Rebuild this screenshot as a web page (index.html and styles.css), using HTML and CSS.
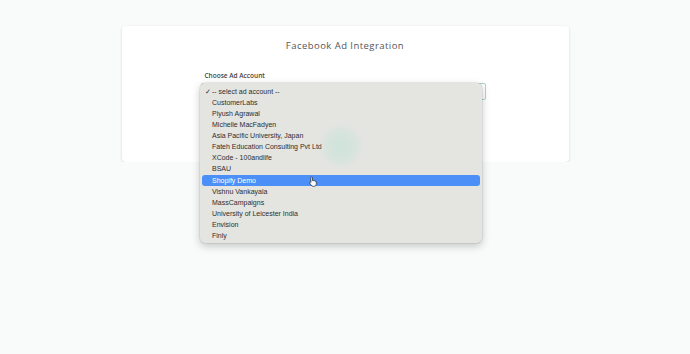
FILE: index.html
```html
<!DOCTYPE html>
<html lang="en">

<head>
    <meta charset="UTF-8">
    <meta name="viewport" content="width=device-width, initial-scale=1.0">
    <title>Facebook Ad Integration</title>

    <link rel="stylesheet" href="styles.css">
</head>

<body>
    <div class="page">
        <div class="card">
            <h2 class="card-title">Facebook Ad Integration</h2>
            <div class="field">
                <label class="field-label">Choose Ad Account</label>
                <div class="select-box"></div>
            </div>
        </div>
    </div>

    <div class="dropdown">
        <div class="option selected"><span class="check">&#10003;</span>-- select ad account --</div>
        <div class="option">CustomerLabs</div>
        <div class="option">Piyush Agrawal</div>
        <div class="option">Michelle MacFadyen</div>
        <div class="option">Asia Pacific University, Japan</div>
        <div class="option">Fateh Education Consulting Pvt Ltd</div>
        <div class="option">XCode - 100andlife</div>
        <div class="option">BSAU</div>
        <div class="option active">Shopify Demo</div>
        <div class="option">Vishnu Vankayala</div>
        <div class="option">MassCampaigns</div>
        <div class="option">University of Leicester India</div>
        <div class="option">Envision</div>
        <div class="option">Finly</div>
    </div>

    <div class="ripple"></div>

    <svg class="cursor" width="9" height="11" viewBox="0 0 9 11">
        <path d="M2.6 0.8 C3.2 0.8 3.5 1.2 3.5 1.8 L3.5 4.6 C3.9 4.3 4.6 4.4 4.8 4.9 C5.2 4.6 5.9 4.7 6.1 5.2 C6.6 5 7.3 5.3 7.3 6 L7.3 8 C7.3 9.4 6.4 10.3 5 10.3 L4.2 10.3 C3.2 10.3 2.6 9.8 2 9 L0.8 7.2 C0.5 6.7 0.7 6.2 1.2 6.1 C1.5 6 1.8 6.2 1.9 6.4 L1.9 1.8 C1.9 1.2 2.1 0.8 2.6 0.8 Z" fill="#fff" stroke="#222" stroke-width="0.7" />
    </svg>
</body>

</html>
```

FILE: styles.css
```css
* {
    box-sizing: border-box;
}

body {
    margin: 0;
    background: #f9fafa;
    font-family: "Liberation Sans", Arial, sans-serif;
}

.page {
    padding-top: 26px;
}

.card {
    width: 447px;
    height: 136px;
    margin: 0 auto;
    background: #fff;
    border-radius: 4px;
    box-shadow: 0 1px 3px rgba(0, 0, 0, 0.15);
    padding-top: 13px;
}

.card-title {
    margin: 0;
    text-align: center;
    font-family: "Open Sans", sans-serif;
    font-weight: 400;
    font-size: 9.5px;
    letter-spacing: 0.45px;
    color: #555;
}

.field {
    margin: 19px 0 0 79px;
    width: 285px;
}

.field-label {
    display: block;
    padding-left: 4px;
    font-family: "Open Sans", sans-serif;
    font-size: 6.5px;
    font-weight: 600;
    color: #444;
    margin-bottom: 3px;
}

.select-box {
    height: 17px;
    border: 1px solid #a9d8c8;
    border-radius: 2px;
    background: #fff;
}

.dropdown {
    position: absolute;
    left: 200px;
    top: 83px;
    width: 282px;
    height: 160px;
    background: #e4e4e1;
    border-radius: 5px;
    box-shadow: 0 3px 8px rgba(0, 0, 0, 0.22), 0 0 0 0.5px rgba(0, 0, 0, 0.12);
    padding: 2.5px 2px 0;
}

.option {
    height: 11.15px;
    line-height: 11.15px;
    padding-left: 10px;
    font-size: 7px;
    color: #2e2e2e;
    border-radius: 3px;
    white-space: nowrap;
    position: relative;
}

.check {
    position: absolute;
    left: 3px;
    font-size: 6.5px;
}

.option.active {
    background: #4b8ff7;
    color: #fff;
}

.ripple {
    position: absolute;
    left: 318px;
    top: 124px;
    width: 46px;
    height: 44px;
    border-radius: 50%;
    background: radial-gradient(circle, rgba(180, 228, 210, 0.45) 0%, rgba(180, 228, 210, 0.28) 45%, rgba(180, 228, 210, 0) 70%);
}

.cursor {
    position: absolute;
    left: 309px;
    top: 176px;
}
```
